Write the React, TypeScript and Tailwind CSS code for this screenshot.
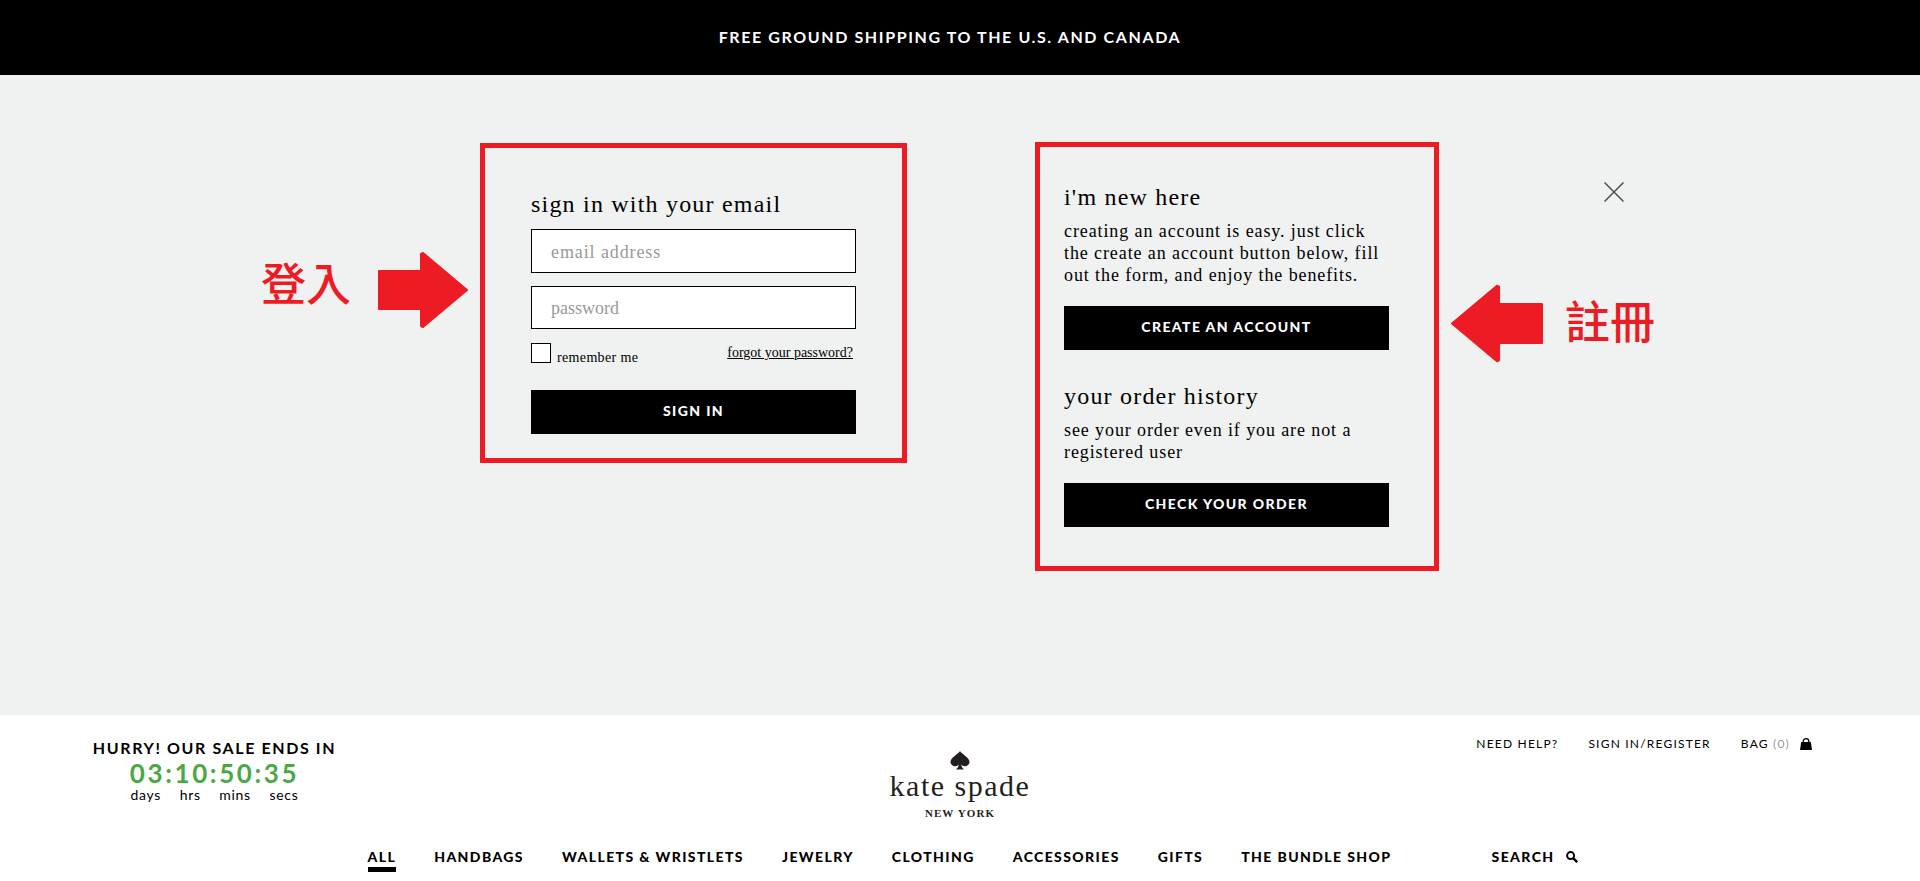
import type { ReactNode } from "react";

const navItems = [
  "ALL",
  "HANDBAGS",
  "WALLETS & WRISTLETS",
  "JEWELRY",
  "CLOTHING",
  "ACCESSORIES",
  "GIFTS",
  "THE BUNDLE SHOP",
];

const timerLabels = ["days", "hrs", "mins", "secs"];

function BlackButton({ children, type = "button" }: { children: ReactNode; type?: "button" | "submit" }) {
  return (
    <button
      type={type}
      className="block h-11 w-full cursor-pointer bg-black pb-0.5 font-['Lato',sans-serif] text-sm font-black tracking-widest text-white"
    >
      {children}
    </button>
  );
}

function Arrow({ className }: { className: string }) {
  return (
    <svg viewBox="0 0 90 76" className={className} aria-hidden="true">
      <path
        d="M1 19H43V2L45 1L89 38L45 75L43 74V57H1Z"
        fill="#ed1c24"
        stroke="#ed1c24"
        strokeWidth="2"
        strokeLinejoin="round"
      />
    </svg>
  );
}

function Note({ children }: { children: ReactNode }) {
  return (
    <p className="font-['Noto_Sans_CJK_TC',sans-serif] text-[45px] leading-[44px] font-medium whitespace-nowrap text-[#ed1c24]">
      {children}
    </p>
  );
}

function SignInBox() {
  return (
    <form className="mt-[68px] w-[427px] shrink-0 border-5 border-[#ed1c24] pt-10 pr-[46px] pb-6 pl-[46px]">
      <h2 className="text-2xl leading-8 tracking-wider">sign in with your email</h2>
      <input
        type="email"
        aria-label="email address"
        placeholder="email address"
        className="mt-[9px] block h-11 w-full border border-black bg-white px-[19px] pt-0.5 text-lg tracking-wider placeholder:text-[#999]"
      />
      <input
        type="password"
        aria-label="password"
        placeholder="password"
        className="mt-[13px] block h-[43px] w-full border border-black bg-white px-[19px] pt-0.5 text-lg placeholder:text-[#999]"
      />
      <div className="mt-[14px] flex items-start justify-between pr-[3px] text-sm leading-5">
        <label className="flex items-start gap-[6px]">
          <input type="checkbox" className="size-5 appearance-none border border-black bg-white checked:bg-black" />
          <span className="mt-[5px] tracking-wide">remember me</span>
        </label>
        <a href="#forgot" className="underline">
          forgot your password?
        </a>
      </div>
      <div className="mt-[22px]">
        <BlackButton type="submit">SIGN IN</BlackButton>
      </div>
    </form>
  );
}

function NewHereBox() {
  return (
    <section className="mt-[67px] w-[404px] shrink-0 border-5 border-[#ed1c24] pt-[34px] pr-[45px] pb-[39px] pl-6">
      <h2 className="text-2xl leading-8 tracking-wider">i'm new here</h2>
      <p className="mt-[7px] text-lg leading-[22px] tracking-wider whitespace-nowrap">
        creating an account is easy. just click
        <br />
        the create an account button below, fill
        <br />
        out the form, and enjoy the benefits.
      </p>
      <div className="mt-5">
        <BlackButton>CREATE AN ACCOUNT</BlackButton>
      </div>
      <h2 className="mt-[30px] text-2xl leading-8 tracking-wider">your order history</h2>
      <p className="mt-[7px] text-lg leading-[22px] tracking-wider">
        see your order even if you are not a
        <br />
        registered user
      </p>
      <div className="mt-5">
        <BlackButton>CHECK YOUR ORDER</BlackButton>
      </div>
    </section>
  );
}

function AccountPanel() {
  return (
    <main className="flex min-h-[640px] items-start justify-center bg-[#f0f2f1] pr-1">
      <div className="mt-[185px]">
        <Note>登入</Note>
      </div>
      <Arrow className="mt-[177px] mr-3 ml-[27px] h-[76px] w-[90px] shrink-0" />
      <SignInBox />
      <div className="w-32 shrink" />
      <NewHereBox />
      <Arrow className="mt-[208px] mr-[22px] ml-3 h-[81px] w-[92px] shrink-0 rotate-180" />
      <div className="mt-[106px] flex flex-col items-center">
        <button type="button" aria-label="close" className="ml-2 cursor-pointer p-px">
          <svg viewBox="0 0 20 20" className="size-5" fill="none" stroke="#4d4d4d" strokeWidth="1.500">
            <path d="M0.500 0.500L19.500 19.500M19.500 0.500L0.500 19.500" />
          </svg>
        </button>
        <div className="mt-[95px]">
          <Note>註冊</Note>
        </div>
      </div>
    </main>
  );
}

function Countdown() {
  return (
    <div className="flex w-[241px] flex-col items-center whitespace-nowrap">
      <p className="text-base leading-5 font-bold tracking-widest">HURRY! OUR SALE ENDS IN</p>
      <p className="mt-px text-[26px] leading-7 font-bold tracking-widest text-[#4ca845]">03:10:50:35</p>
      <div className="flex w-[168px] justify-between text-sm leading-4 tracking-wider">
        {timerLabels.map((label) => (
          <span key={label}>{label}</span>
        ))}
      </div>
    </div>
  );
}

function Logo() {
  return (
    <a href="#home" className="mt-9 flex flex-col items-center font-['Liberation_Serif',serif] text-[#231f20]">
      <svg viewBox="0 0 20 19" className="h-[19px] w-5" fill="currentColor" aria-hidden="true">
        <path d="M10 0C11.500 3 19.500 6.500 19.500 11C19.500 15.500 13.500 16.300 11.200 13.600C11.500 16 12.600 17.300 14 18.600H6C7.400 17.300 8.500 16 8.800 13.600C6.500 16.300 0.500 15.500 0.500 11C0.500 6.500 8.500 3 10 0Z" />
      </svg>
      <span className="text-[30px] leading-8 tracking-wider">kate spade</span>
      <span className="mt-[3px] text-[11px] leading-4 font-bold tracking-widest">NEW YORK</span>
    </a>
  );
}

function BagIcon() {
  return (
    <svg viewBox="0 0 12 12" className="size-3" aria-hidden="true">
      <path d="M1.200 4H10.800L12 12H0Z" />
      <path d="M3.200 5V3.500a2.800 2.800 0 0 1 5.600 0V5" fill="none" stroke="#000" strokeWidth="1.300" />
    </svg>
  );
}

function SearchIcon() {
  return (
    <svg viewBox="0 0 12 12" className="size-3" fill="none" stroke="#000" aria-hidden="true">
      <circle cx="4.600" cy="4.600" r="3.500" strokeWidth="2" />
      <path d="M7.200 7.200L11.200 11.200" strokeWidth="2.400" />
    </svg>
  );
}

function Header() {
  return (
    <header className="bg-white font-['Lato',sans-serif]">
      <div className="grid grid-cols-[1fr_auto_1fr]">
        <div className="pt-[23px] pl-[94px]">
          <Countdown />
        </div>
        <Logo />
        <div className="flex items-start justify-end gap-[30px] pt-[19px] pr-[108px] text-xs leading-5 tracking-widest whitespace-nowrap">
          <a href="#help">NEED HELP?</a>
          <a href="#account">SIGN IN/REGISTER</a>
          <a href="#bag" className="flex items-center">
            BAG&nbsp;<span className="mr-2.5 text-[#999]">(0)</span>
            <BagIcon />
          </a>
        </div>
      </div>
      <div className="mt-[26px] flex justify-center pl-[26px] text-sm leading-5 font-black tracking-widest whitespace-nowrap">
        <nav className="flex w-[1024px] justify-between">
          {navItems.map((item) => (
            <a key={item} href="#shop" className={item === "ALL" ? "border-b-5 border-black" : ""}>
              {item}
            </a>
          ))}
        </nav>
        <button type="button" className="ml-[100px] flex h-5 cursor-pointer items-center gap-3 tracking-widest">
          SEARCH
          <SearchIcon />
        </button>
      </div>
    </header>
  );
}

export default function App() {
  return (
    <div className="min-h-screen bg-white font-['Liberation_Serif',serif] text-black">
      <p className="bg-black pt-[26px] pr-5 pb-7 text-center font-['Lato',sans-serif] text-base leading-[21px] font-bold tracking-widest text-white">
        FREE GROUND SHIPPING TO THE U.S. AND CANADA
      </p>
      <AccountPanel />
      <Header />
    </div>
  );
}
